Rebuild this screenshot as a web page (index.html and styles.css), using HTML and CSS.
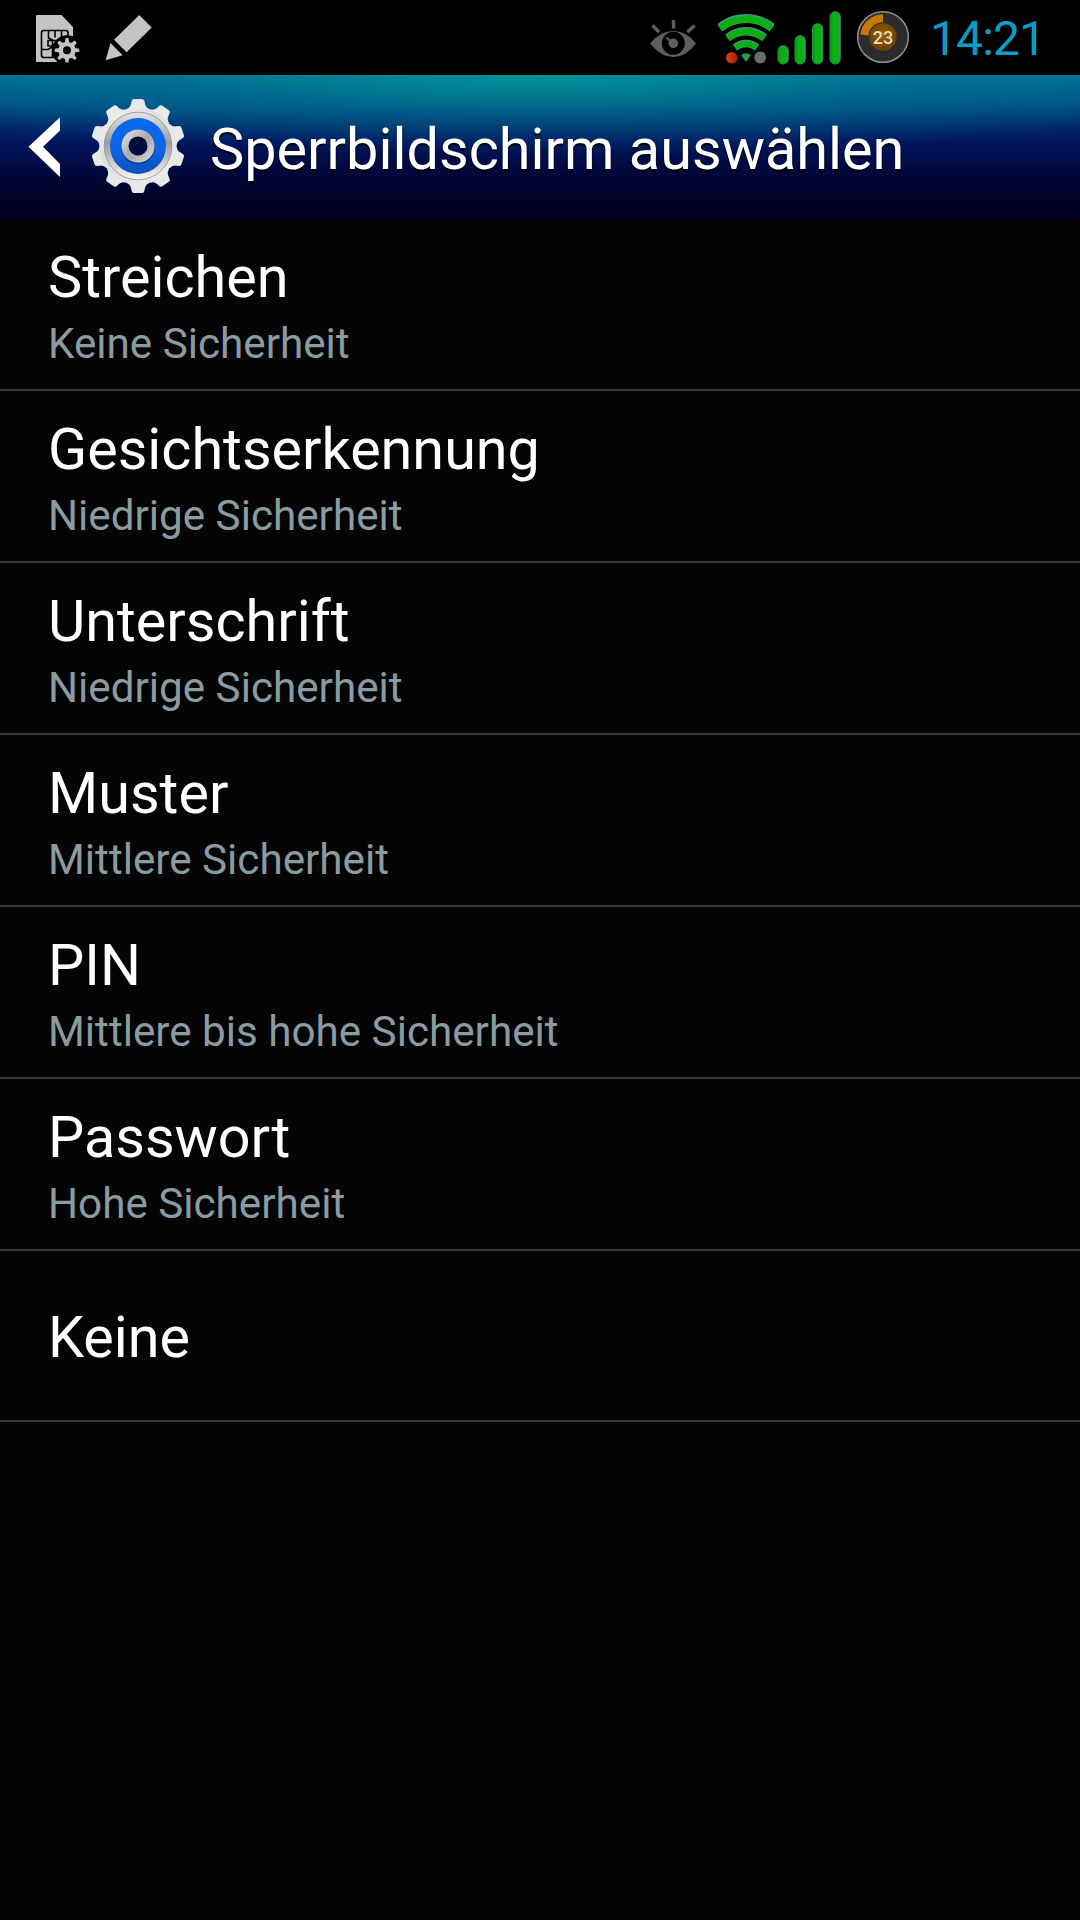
FILE: index.html
```
<!DOCTYPE html>
<html lang="de">
<head>
  <meta charset="UTF-8">
  <meta name="viewport" content="width=device-width, initial-scale=1.0">
  <title>Sperrbildschirm auswählen</title>
  <link rel="stylesheet" href="styles.css">
</head>
<body>

<div class="status-bar">
  <div class="notifications">
    <!-- SIM card -->
    <svg class="icon-sim" width="46" height="50" viewBox="35 14 46 50">
      <path fill="#c4c4c4" d="M37 15H61.500L73 27V61.500Q73 62 72 62H37Q36 62 36 61V16Q36 15 37 15Z"/>
      <path fill="none" stroke="#000" stroke-width="1.600" d="M43.500 30.500H66Q68 30.500 68 33V57.500H43.500Q41.500 57.500 41.500 55V33Q41.500 30.500 43.500 30.500ZM48.500 30.500V38L52.500 40V57M55 30.500V37.500M61.500 30.500V37.500M42 49.500H48L52 47M57 40.500H48V46H53"/>
      <circle cx="67" cy="50.300" r="15" fill="#000"/>
      <g fill="#c4c4c4">
        <path id="smallTooth" d="M64.800 43L65.500 38H68.500L69.200 43ZM64.800 57.600L65.500 62.600H68.500L69.200 57.600Z"/>
        <use href="#smallTooth" transform="rotate(45 67 50.300)"/>
        <use href="#smallTooth" transform="rotate(90 67 50.300)"/>
        <use href="#smallTooth" transform="rotate(135 67 50.300)"/>
      </g>
      <circle cx="67" cy="50.300" r="6.300" fill="none" stroke="#c4c4c4" stroke-width="4.600"/>
    </svg>
    <!-- Pencil -->
    <svg width="48" height="48" viewBox="105 15 48 48">
      <path fill="#c4c4c4" d="M139.300 16L151.700 28.500L126.600 53.300L114 40.700ZM110.500 44L122.600 56.200L105.600 61.200Z"/>
    </svg>
  </div>

  <div class="system-icons">
    <!-- Smart stay eye -->
    <svg class="icon-eye" width="48" height="42" viewBox="649 18 48 42">
      <path fill="#5e5e5e" d="M650 43.500Q660 31 673.300 31T696 43.500Q686 57 673.300 57T650 43.500Z"/>
      <circle cx="673.300" cy="43.300" r="11.500" fill="#000"/>
      <circle cx="673.300" cy="43.300" r="4.800" fill="#5e5e5e"/>
      <path fill="none" stroke="#5e5e5e" stroke-width="2.200" d="M673 43L666 37.500"/>
      <path fill="none" stroke="#5e5e5e" stroke-width="3.400" d="M673.500 20V28.500M652.500 25.500L659 32M694.500 25.500L687.500 32"/>
    </svg>
    <!-- WLAN -->
    <svg class="icon-wifi" width="56" height="52" viewBox="718 12 56 52">
      <defs>
        <clipPath id="wedge"><path d="M746 62L711.500 17V5H780.500V17Z"/></clipPath>
        <linearGradient id="red" x2="1"><stop offset="0" stop-color="#e04010"/><stop offset="1" stop-color="#a02000"/></linearGradient>
      </defs>
      <g clip-path="url(#wedge)" fill="none">
        <g stroke="#359b6b">
          <circle cx="746" cy="60" r="41.500" stroke-width="9"/>
          <circle cx="746" cy="60" r="28.800" stroke-width="8.500"/>
          <circle cx="746" cy="60" r="16.500" stroke-width="7.500"/>
        </g>
        <g stroke="#08b010">
          <circle cx="746" cy="60" r="40.800" stroke-width="6.500"/>
          <circle cx="746" cy="60" r="28.200" stroke-width="6"/>
          <circle cx="746" cy="60" r="16" stroke-width="5"/>
        </g>
      </g>
      <path fill="#269a50" d="M741 55Q746 51.500 751 55L746 62Z"/>
      <circle cx="731.800" cy="57.700" r="5.800" fill="url(#red)"/>
      <circle cx="760.200" cy="57.500" r="5.900" fill="#6b6b6b"/>
    </svg>
    <!-- Signal -->
    <svg class="icon-signal" width="66" height="56" viewBox="776 10 66 56">
      <defs>
        <linearGradient id="bar" x2="1">
          <stop offset="0" stop-color="#078a10"/><stop offset="0.350" stop-color="#08b810"/><stop offset="0.650" stop-color="#08b010"/><stop offset="1" stop-color="#359b6b"/>
        </linearGradient>
      </defs>
      <g fill="url(#bar)" stroke="#2a9058" stroke-width="1">
        <rect x="778" y="45.700" width="10.300" height="18.300" rx="5"/>
        <rect x="795" y="35.700" width="10.300" height="28.300" rx="5"/>
        <rect x="812.500" y="23.700" width="10.300" height="40.300" rx="5"/>
        <rect x="830" y="11.700" width="10.300" height="52.300" rx="5"/>
      </g>
    </svg>
    <!-- Battery -->
    <svg class="icon-battery" width="54" height="54" viewBox="856.300 10 54 54">
      <defs>
        <radialGradient id="core" cy="0.400"><stop offset="0" stop-color="#a06000"/><stop offset="1" stop-color="#6e4200"/></radialGradient>
      </defs>
      <circle cx="883.300" cy="37" r="25.300" fill="#2b2b2b" stroke="#929292" stroke-width="1.500"/>
      <path fill="none" stroke="#c87800" stroke-width="8" d="M883.300 18.300A18.700 18.700 0 0 0 864.700 35"/>
      <circle cx="883.300" cy="37" r="13.700" fill="url(#core)"/>
      <text class="battery-level" x="883.300" y="43.800" text-anchor="middle">23</text>
    </svg>
    <span class="clock">14:21</span>
  </div>
</div>

<div class="action-bar">
  <svg class="icon-back" width="34" height="62" viewBox="28 116 34 62">
    <path fill="#fff" d="M60 117.300V130.500L43 146.700L60 164V177L28.500 146.700Z"/>
  </svg>
  <svg class="icon-settings" width="98" height="98" viewBox="-49 -49 98 98">
    <defs>
      <linearGradient id="metal" x2="1" y2="1">
        <stop offset="0" stop-color="#f4f4f4"/><stop offset="0.400" stop-color="#dedede"/><stop offset="1" stop-color="#f0f0f0"/>
      </linearGradient>
      <linearGradient id="bevel" x2="0" y2="1">
        <stop offset="0" stop-color="#e6e6e6"/><stop offset="0.450" stop-color="#9c9c9c"/><stop offset="1" stop-color="#f6f6f6"/>
      </linearGradient>
      <linearGradient id="blue" x2="0" y2="1">
        <stop offset="0" stop-color="#0868f0"/><stop offset="0.550" stop-color="#0a66e6"/><stop offset="1" stop-color="#0c4fb8"/>
      </linearGradient>
      <linearGradient id="hub" x2="1" y2="1">
        <stop offset="0" stop-color="#ededed"/><stop offset="0.500" stop-color="#a9a9a9"/><stop offset="1" stop-color="#dcdcdc"/>
      </linearGradient>
    </defs>
    <g fill="#e8e8e8">
      <path id="tooth" d="M-11.500 -37Q-8 -38 -7 -42L-6.200 -45.500Q-5.600 -47 -4 -47H4Q5.600 -47 6.200 -45.500L7 -42Q8 -38 11.500 -37V-30H-11.500Z"/>
      <use href="#tooth" transform="rotate(36)"/>
      <use href="#tooth" transform="rotate(72)"/>
      <use href="#tooth" transform="rotate(108)"/>
      <use href="#tooth" transform="rotate(144)"/>
      <use href="#tooth" transform="rotate(180)"/>
      <use href="#tooth" transform="rotate(216)"/>
      <use href="#tooth" transform="rotate(252)"/>
      <use href="#tooth" transform="rotate(288)"/>
      <use href="#tooth" transform="rotate(324)"/>
    </g>
    <circle r="38.300" fill="url(#metal)"/>
    <circle r="33.800" fill="url(#bevel)" stroke="#8e8e8e" stroke-width="0.800"/>
    <circle r="28" fill="url(#blue)"/>
    <circle cy="1" r="17.300" fill="#0a3f9c"/>
    <circle r="16.600" fill="url(#hub)"/>
    <circle r="9.500" fill="#000c40"/>
  </svg>
  <h1 class="title">Sperrbildschirm auswählen</h1>
</div>

<ul class="lock-list">
  <li class="lock-item">
    <span class="name">Streichen</span>
    <span class="summary">Keine Sicherheit</span>
  </li>
  <li class="lock-item">
    <span class="name">Gesichtserkennung</span>
    <span class="summary">Niedrige Sicherheit</span>
  </li>
  <li class="lock-item">
    <span class="name">Unterschrift</span>
    <span class="summary">Niedrige Sicherheit</span>
  </li>
  <li class="lock-item">
    <span class="name">Muster</span>
    <span class="summary">Mittlere Sicherheit</span>
  </li>
  <li class="lock-item">
    <span class="name">PIN</span>
    <span class="summary">Mittlere bis hohe Sicherheit</span>
  </li>
  <li class="lock-item">
    <span class="name">Passwort</span>
    <span class="summary">Hohe Sicherheit</span>
  </li>
  <li class="lock-item single">
    <span class="name">Keine</span>
  </li>
</ul>

</body>
</html>
```
FILE: styles.css
```
* {
  box-sizing: border-box;
}

body {
  margin: 0;
  width: 1080px;
  height: 1920px;
  overflow: hidden;
  background-color: #050505;
  color: #fff;
  font-family: Roboto, sans-serif;
}

svg {
  display: block;
  flex: none;
}

/* Status bar */
.status-bar {
  display: flex;
  justify-content: space-between;
  align-items: flex-start;
  height: 75px;
  padding-left: 35px;
  padding-right: 38px;
  background-color: #000;
}

.notifications {
  display: flex;
  gap: 24px;
  padding-top: 14px;
}

.system-icons {
  display: flex;
  align-items: flex-start;
  height: 75px;
}

.icon-eye {
  margin-top: 18px;
  margin-right: 21px;
}

.icon-wifi {
  margin-top: 12px;
  margin-right: 2px;
}

.icon-signal {
  margin-top: 10px;
  margin-right: 14px;
}

.icon-battery {
  margin-top: 10px;
  margin-right: 20px;
}

.battery-level {
  fill: #e6dccb;
  font-size: 18px;
  font-weight: 500;
}

.clock {
  width: 112px;
  margin-top: 11px;
  color: #0a9dc8;
  font-size: 48px;
  line-height: 56px;
  letter-spacing: -0.9px;
  white-space: nowrap;
}

/* Action bar */
.action-bar {
  display: flex;
  align-items: center;
  height: 144px;
  padding-left: 28px;
  background:
    radial-gradient(ellipse 66% 56% at 50% 0, rgba(0, 150, 150, 0.85), rgba(0, 120, 140, 0.45) 50%, rgba(0, 100, 130, 0)),
    linear-gradient(#00729a, #00508a 20%, #002c70 34%, #001560 46%, #000a40 65%, #000020 90%);
}

.icon-settings {
  margin-left: 27px;
  margin-bottom: 2px;
}

.title {
  margin: 6px 0 0 23px;
  font-size: 57.6px;
  font-weight: 400;
  line-height: 66px;
  text-shadow: 0 2px 2px #000;
  white-space: nowrap;
}

/* List */
.lock-list {
  margin: 0;
  padding: 0;
  list-style: none;
}

.lock-item {
  display: flex;
  flex-direction: column;
  justify-content: center;
  height: 172px;
  padding-top: 3px;
  padding-left: 48px;
  border-bottom: 2px solid #3a3a3a;
}

.single {
  height: 171px;
  padding-top: 4px;
}

.name {
  font-size: 57.5px;
  line-height: 68px;
}

.summary {
  margin-top: 9px;
  color: #8a9ba1;
  font-size: 42.2px;
  line-height: 46px;
}
```
